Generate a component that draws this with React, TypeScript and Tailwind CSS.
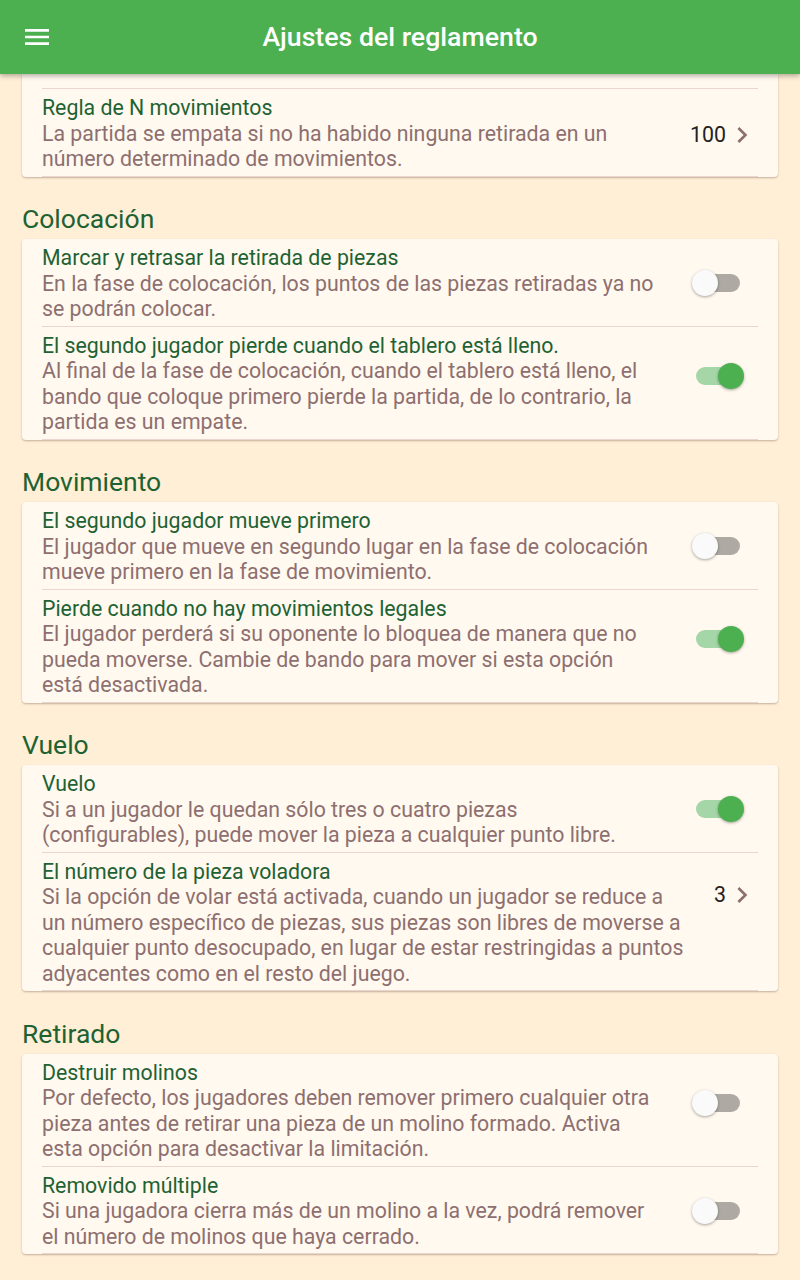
import { ReactNode } from "react";

type Row = {
  title: string;
  sub: string;
  on?: boolean;
  value?: string;
  mt: string;
};

const sections: { name: string; rows: Row[] }[] = [
  {
    name: "Colocación",
    rows: [
      {
        title: "Marcar y retrasar la retirada de piezas",
        sub: "En la fase de colocación, los puntos de las piezas retiradas ya no se podrán colocar.",
        on: false,
        mt: "mt-[25px]",
      },
      {
        title: "El segundo jugador pierde cuando el tablero está lleno.",
        sub: "Al final de la fase de colocación, cuando el tablero está lleno, el bando que coloque primero pierde la partida, de lo contrario, la partida es un empate.",
        on: true,
        mt: "mt-[30px]",
      },
    ],
  },
  {
    name: "Movimiento",
    rows: [
      {
        title: "El segundo jugador mueve primero",
        sub: "El jugador que mueve en segundo lugar en la fase de colocación mueve primero en la fase de movimiento.",
        on: false,
        mt: "mt-[25px]",
      },
      {
        title: "Pierde cuando no hay movimientos legales",
        sub: "El jugador perderá si su oponente lo bloquea de manera que no pueda moverse. Cambie de bando para mover si esta opción está desactivada.",
        on: true,
        mt: "mt-[30px]",
      },
    ],
  },
  {
    name: "Vuelo",
    rows: [
      {
        title: "Vuelo",
        sub: "Si a un jugador le quedan sólo tres o cuatro piezas (configurables), puede mover la pieza a cualquier punto libre.",
        on: true,
        mt: "mt-[25px]",
      },
      {
        title: "El número de la pieza voladora",
        sub: "Si la opción de volar está activada, cuando un jugador se reduce a un número específico de piezas, sus piezas son libres de moverse a cualquier punto desocupado, en lugar de estar restringidas a puntos adyacentes como en el resto del juego.",
        value: "3",
        mt: "mt-[20px]",
      },
    ],
  },
  {
    name: "Retirado",
    rows: [
      {
        title: "Destruir molinos",
        sub: "Por defecto, los jugadores deben remover primero cualquier otra pieza antes de retirar una pieza de un molino formado. Activa esta opción para desactivar la limitación.",
        on: false,
        mt: "mt-[30px]",
      },
      {
        title: "Removido múltiple",
        sub: "Si una jugadora cierra más de un molino a la vez, podrá remover el número de molinos que haya cerrado.",
        on: false,
        mt: "mt-[25px]",
      },
    ],
  },
];

function Toggle({ on }: { on: boolean }) {
  return (
    <div className="relative h-[26px] w-[102px] shrink-0">
      <div
        className={`absolute left-[40px] top-[4px] h-[18px] w-[44px] rounded-full ${
          on ? "bg-[#a5d6a7]" : "bg-[#aeaaa3]"
        }`}
      />
      <div
        className={`absolute top-0 h-[26px] w-[26px] rounded-full shadow-[0_1px_3px_rgba(0,0,0,0.35)] ${
          on ? "left-[62px] bg-[#4caf50]" : "left-[36px] bg-[#fafafa]"
        }`}
      />
    </div>
  );
}

function Chevron() {
  return (
    <svg width="32" height="32" viewBox="0 0 24 24" className="shrink-0">
      <path
        d="M10 6L8.59 7.41 13.17 12l-4.58 4.59L10 18l6-6z"
        fill="#8e6f6f"
      />
    </svg>
  );
}

function Value({ value }: { value: string }) {
  return (
    <div className="flex shrink-0 items-center">
      <span className="text-[21.3px] leading-[26px] text-[#222]">{value}</span>
      <Chevron />
    </div>
  );
}

function Item({ row }: { row: Row }) {
  let trailing: ReactNode = null;
  if (row.value) trailing = <Value value={row.value} />;
  else trailing = <Toggle on={!!row.on} />;

  return (
    <div className="flex border-b border-[#ead6cf] pb-[4px] pt-[6px]">
      <div className="min-w-0 flex-1 text-[21.3px] leading-[25.5px]">
        <div className="text-[#1e6233]">{row.title}</div>
        <div className="text-[#8e6f6f]">{row.sub}</div>
      </div>
      <div className={`self-start ${row.value ? "ml-[28px]" : ""} ${row.mt}`}>
        {trailing}
      </div>
    </div>
  );
}

export default function App() {
  return (
    <div
      className="min-h-[1280px] bg-[#ffefd6]"
      style={{ fontFamily: "Roboto, 'Noto Sans', sans-serif" }}
    >
      <header className="relative z-10 flex h-[74px] items-center bg-[#4caf50] shadow-[0_2px_5px_rgba(0,0,0,0.3)]">
        <svg width="32" height="32" viewBox="0 0 24 24" className="ml-[21px]">
          <path
            d="M3 18h18v-2H3v2zm0-5h18v-2H3v2zm0-7v2h18V6H3z"
            fill="#ffffff"
          />
        </svg>
        <h1 className="flex-1 pr-[53px] text-center text-[26.7px] font-medium text-white">
          Ajustes del reglamento
        </h1>
      </header>

      <div className="pb-6">
        <div className="mx-[22px] rounded-b-[4px] bg-[#fff9ef] px-5 shadow-[0_1px_2px_rgba(110,80,70,0.4)]">
          <div className="h-[15px] border-b border-[#ead6cf]" />
          <div className="flex border-b border-[#ead6cf] pb-[4px] pt-[6px]">
            <div className="min-w-0 flex-1 text-[21.3px] leading-[25.5px]">
              <div className="text-[#1e6233]">Regla de N movimientos</div>
              <div className="text-[#8e6f6f]">
                La partida se empata si no ha habido ninguna retirada en un
                número determinado de movimientos.
              </div>
            </div>
            <div className="ml-[28px] mt-[24px] self-start">
              <Value value="100" />
            </div>
          </div>
        </div>

        {sections.map((s) => (
          <section key={s.name}>
            <h2 className="mx-[22px] mb-[4px] mt-[26.5px] text-[26.5px] leading-8 text-[#1e6233]">
              {s.name}
            </h2>
            <div className="mx-[22px] rounded-[4px] bg-[#fff9ef] px-5 shadow-[0_1px_2px_rgba(110,80,70,0.4)]">
              {s.rows.map((r) => (
                <Item key={r.title} row={r} />
              ))}
            </div>
          </section>
        ))}
      </div>
    </div>
  );
}
